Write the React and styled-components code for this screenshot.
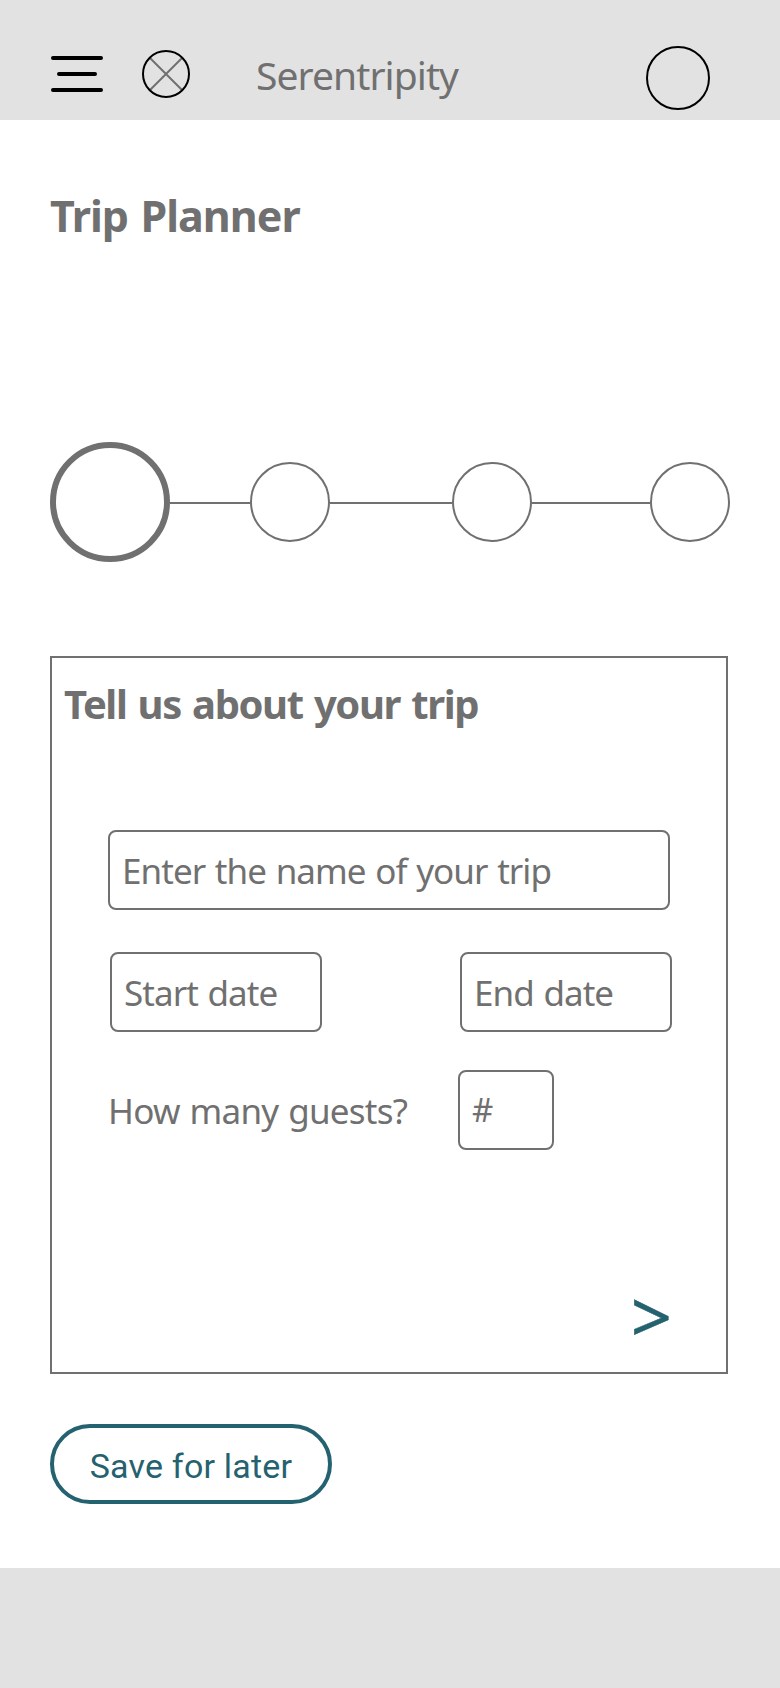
import React from "react";
import styled, { createGlobalStyle } from "styled-components";

const GREY = "#707070";
const TEAL = "#25626f";
const BAR = "#e2e2e2";

const GlobalStyle = createGlobalStyle`
  * { box-sizing: border-box; }
  body {
    margin: 0;
    background: #fff;
    color: ${GREY};
    font-family: "Noto Sans", "Open Sans", sans-serif;
  }
`;

const Page = styled.div`
  display: flex;
  flex-direction: column;
  width: 780px;
  height: 1688px;
  background: #fff;
`;

const Header = styled.header`
  display: flex;
  align-items: flex-start;
  height: 120px;
  padding: 46px 70px 0 51px;
  background: ${BAR};
`;

const MenuButton = styled.button`
  display: flex;
  flex-direction: column;
  align-items: center;
  gap: 12px;
  width: 52px;
  margin-top: 10px;
  padding: 0;
  border: 0;
  background: none;
`;

const MenuLine = styled.span`
  width: ${({ $width }) => $width}px;
  height: 4px;
  border-radius: 2px;
  background: #000;
`;

const Logo = styled.svg`
  display: block;
  margin: 4px 0 0 39px;
`;

const Brand = styled.div`
  margin: 9px auto 0 66px;
  font-size: 39px;
  line-height: 40px;
  letter-spacing: -0.92px;
  white-space: nowrap;
`;

const Avatar = styled.div`
  width: 64px;
  height: 64px;
  border: 2px solid #000;
  border-radius: 50%;
`;

const Main = styled.main`
  display: flex;
  flex-direction: column;
  align-items: flex-start;
  flex: 1;
  padding: 66px 50px 0;
`;

const Title = styled.h1`
  margin: 0;
  font-size: 43px;
  line-height: 60px;
  font-weight: 700;
  letter-spacing: -1px;
  word-spacing: 2.5px;
  white-space: nowrap;
`;

const Stepper = styled.div`
  display: flex;
  align-items: center;
  margin-top: 196px;
`;

const Step = styled.div`
  width: ${({ $active }) => ($active ? 120 : 80)}px;
  height: ${({ $active }) => ($active ? 120 : 80)}px;
  border: ${({ $active }) => ($active ? 6 : 2)}px solid ${GREY};
  border-radius: 50%;
`;

const Connector = styled.div`
  width: ${({ $length }) => $length}px;
  height: 2px;
  margin-top: 2px;
  background: ${GREY};
`;

const Card = styled.section`
  display: flex;
  flex-direction: column;
  width: 678px;
  height: 718px;
  margin-top: 94px;
  padding: 16px 54px 0 12px;
  border: 2px solid ${GREY};
`;

const CardTitle = styled.h2`
  margin: 0;
  font-size: 40px;
  line-height: 60px;
  font-weight: 700;
  letter-spacing: -1.4px;
  word-spacing: 2.2px;
  white-space: nowrap;
`;

const Form = styled.div`
  display: flex;
  flex-direction: column;
  flex: 1;
  padding: 96px 0 0 44px;
`;

const Field = styled.div`
  display: flex;
  align-items: center;
  width: ${({ $width }) => $width}px;
  height: 80px;
  padding: 0 12px ${({ $size }) => ($size ? 2 : 0)}px;
  border: 2px solid ${GREY};
  border-radius: 8px;
  font-size: ${({ $size }) => $size || 35}px;
  letter-spacing: -0.95px;
  word-spacing: 1.5px;
  white-space: nowrap;
`;

const DateRow = styled.div`
  display: flex;
  gap: 138px;
  margin: 42px 0 0 2px;
`;

const GuestRow = styled.div`
  display: flex;
  align-items: center;
  justify-content: space-between;
  width: 446px;
  margin-top: 38px;
`;

const GuestLabel = styled.label`
  font-size: 35px;
  letter-spacing: -0.75px;
  word-spacing: 1.5px;
  white-space: nowrap;
`;

const NextButton = styled.button`
  align-self: flex-end;
  margin-top: 125px;
  padding: 0;
  border: 0;
  background: none;
  color: ${TEAL};
  font-family: inherit;
  font-size: 72px;
  line-height: 80px;
  -webkit-text-stroke: 0.5px ${TEAL};
`;

const SaveButton = styled.button`
  width: 282px;
  height: 80px;
  margin-top: 50px;
  padding: 3px 0 0;
  border: 4px solid ${TEAL};
  border-radius: 40px;
  background: #fff;
  color: ${TEAL};
  font-family: Roboto, sans-serif;
  font-size: 34px;
  letter-spacing: 0.2px;
  white-space: nowrap;
`;

const Footer = styled.footer`
  height: 120px;
  background: ${BAR};
`;

export default function App() {
  return (
    <Page>
      <GlobalStyle />
      <Header>
        <MenuButton aria-label="Menu">
          <MenuLine $width={52} />
          <MenuLine $width={40} />
          <MenuLine $width={52} />
        </MenuButton>
        <Logo width="48" height="48" viewBox="0 0 48 48" fill="none">
          <path d="M8 8 40 40M40 8 8 40" stroke={GREY} strokeWidth="2" />
          <circle cx="24" cy="24" r="23" stroke="#000" strokeWidth="2" />
        </Logo>
        <Brand>Serentripity</Brand>
        <Avatar />
      </Header>
      <Main>
        <Title>Trip Planner</Title>
        <Stepper>
          <Step $active />
          <Connector $length={80} />
          <Step />
          <Connector $length={122} />
          <Step />
          <Connector $length={118} />
          <Step />
        </Stepper>
        <Card>
          <CardTitle>Tell us about your trip</CardTitle>
          <Form>
            <Field $width={562}>Enter the name of your trip</Field>
            <DateRow>
              <Field $width={212}>Start date</Field>
              <Field $width={212}>End date</Field>
            </DateRow>
            <GuestRow>
              <GuestLabel>How many guests?</GuestLabel>
              <Field $width={96} $size={33}>#</Field>
            </GuestRow>
            <NextButton>&gt;</NextButton>
          </Form>
        </Card>
        <SaveButton>Save for later</SaveButton>
      </Main>
      <Footer />
    </Page>
  );
}
